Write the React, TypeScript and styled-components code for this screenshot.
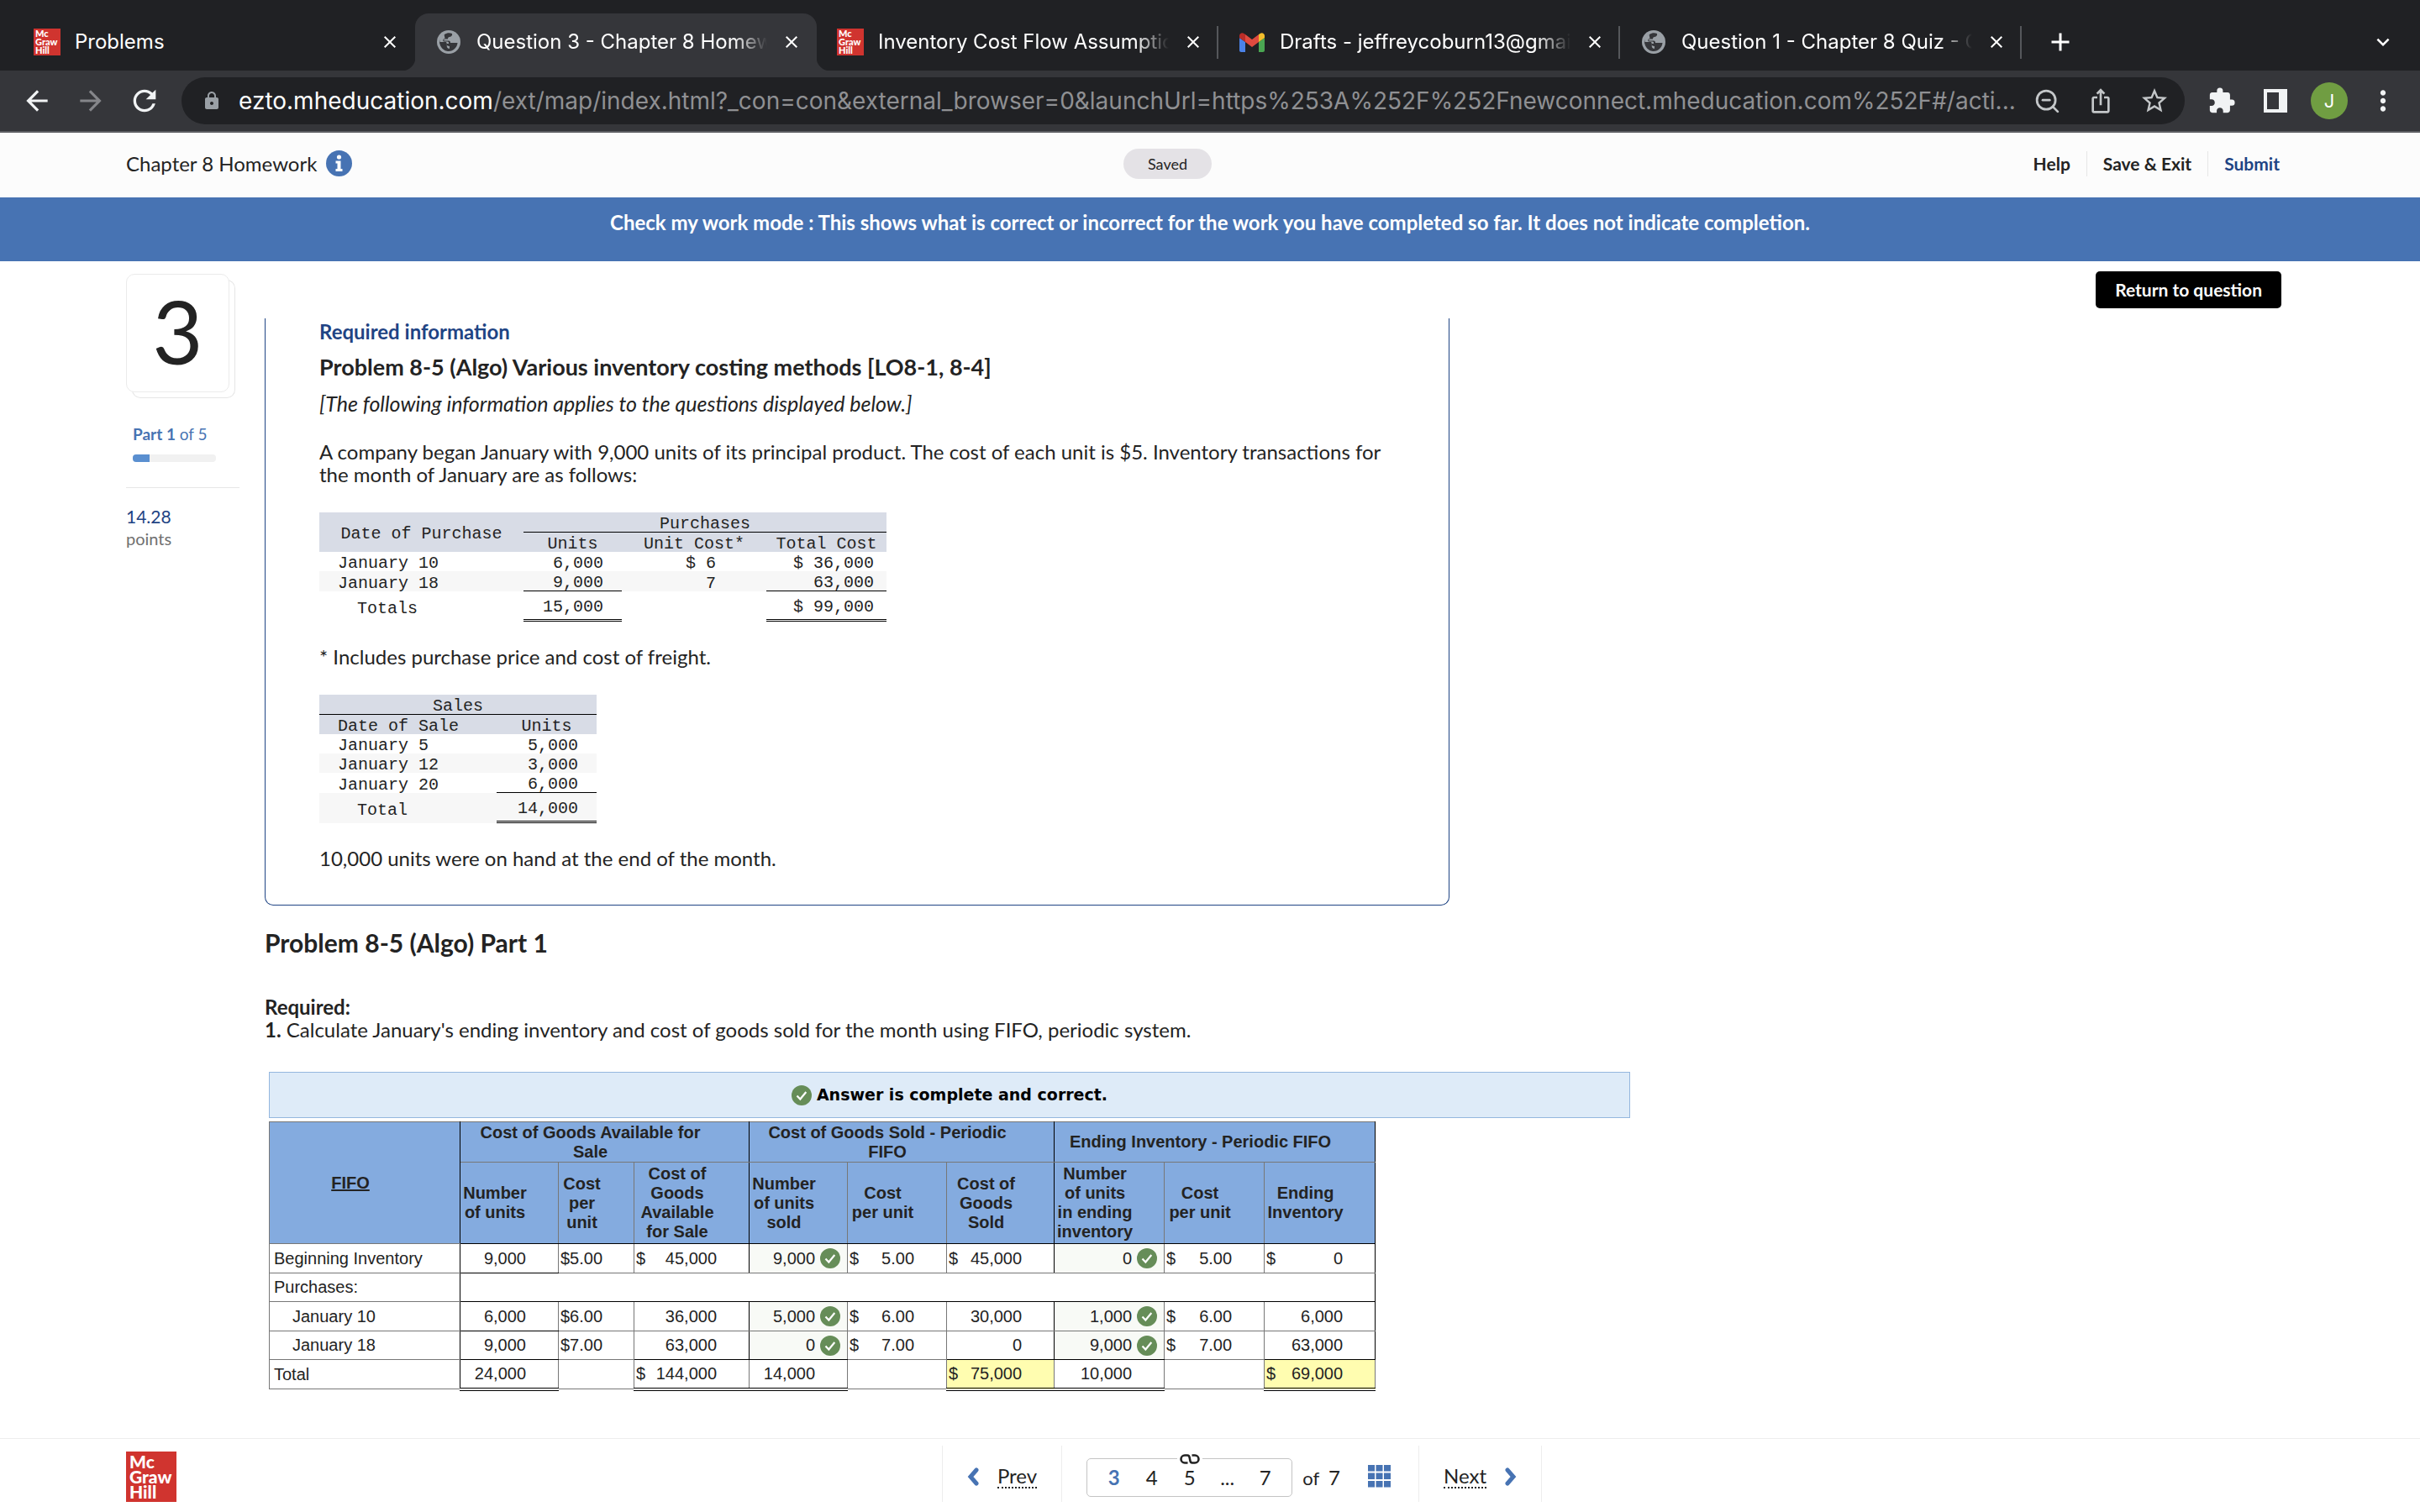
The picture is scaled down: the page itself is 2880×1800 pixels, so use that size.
import React from "react";
import styled, { createGlobalStyle, css } from "styled-components";
import { ZoomOut } from "lucide-react";
import {
  MdAdd,
  MdArrowBack,
  MdArrowForward,
  MdClose,
  MdExpandMore,
  MdExtension,
  MdIosShare,
  MdLock,
  MdMoreVert,
  MdRefresh,
  MdStarBorder,
} from "react-icons/md";

const ui = `Inter, Roboto, sans-serif`;
const body = `Lato, "Open Sans", sans-serif`;
const mono = `"Liberation Mono", "Courier New", monospace`;
const arial = `"Liberation Sans", Arial, sans-serif`;
const verdana = `"DejaVu Sans", Verdana, sans-serif`;

const ink = "#232323";
const navy = "#1f4484";
const blue = "#4773b3";
const red = "#d0342f";

const GlobalStyle = createGlobalStyle`
  *, *::before, *::after { box-sizing: border-box; }
  body { margin: 0; background: #fff; color: ${ink}; font-family: ${body}; }
  button { font: inherit; color: inherit; border: 0; padding: 0; background: none; cursor: pointer; }
  a { color: inherit; text-decoration: none; }
  h1, h2, h3, p { margin: 0; }
`;

const Page = styled.div`
  display: flex;
  flex-direction: column;
  min-height: 100vh;
`;

/* ---------- Browser chrome ---------- */

const TabStrip = styled.div`
  display: flex;
  align-items: stretch;
  height: 84px;
  padding: 16px 24px 0 16px;
  background: #202124;
  color: #fff;
  font-family: ${ui};
`;

const Tab = styled.div<{ $active?: boolean; $divider?: boolean }>`
  position: relative;
  display: flex;
  align-items: center;
  gap: 17px;
  flex: 0 1 478px;
  min-width: 0;
  padding: 0 18px 0 24px;
  border-radius: 16px 16px 0 0;
  ${(p) =>
    p.$active &&
    css`
      background: #35363a;
      &::before,
      &::after {
        content: "";
        position: absolute;
        bottom: 0;
        width: 16px;
        height: 16px;
      }
      &::before {
        right: 100%;
        background: radial-gradient(circle at 0 0, #202124 16px, #35363a 17px);
      }
      &::after {
        left: 100%;
        background: radial-gradient(circle at 100% 0, #202124 16px, #35363a 17px);
      }
    `}
  ${(p) =>
    p.$divider &&
    css`
      &::after {
        content: "";
        position: absolute;
        right: 0;
        top: 15px;
        width: 2px;
        height: 39px;
        background: #55575b;
      }
    `}
`;

const TabIcon = styled.span`
  display: flex;
  justify-content: center;
  flex: 0 0 32px;
`;

const TabTitle = styled.span<{ $fade?: boolean }>`
  flex: 1;
  min-width: 0;
  overflow: hidden;
  white-space: nowrap;
  font-size: 24px;
  line-height: 32px;
  ${(p) =>
    p.$fade &&
    css`
      mask-image: linear-gradient(90deg, #000 calc(100% - 40px), transparent);
    `}
`;

const IconButton = styled.button`
  display: flex;
  align-items: center;
  justify-content: center;
  flex: none;
`;

const NewTab = styled(IconButton)`
  width: 64px;
  margin-left: 14px;
`;

const TabSearch = styled(IconButton)`
  width: 40px;
  margin-left: auto;
`;

const Toolbar = styled.div`
  display: flex;
  align-items: center;
  height: 74px;
  padding: 0 12px;
  background: #35363a;
  border-bottom: 2px solid #5d5e62;
  color: #f1f3f4;
  font-family: ${ui};
`;

const NavButton = styled(IconButton)<{ $dim?: boolean }>`
  width: 64px;
  height: 56px;
  color: ${(p) => (p.$dim ? "#85868a" : "#f1f3f4")};
`;

const Omnibox = styled.div`
  display: flex;
  align-items: center;
  flex: 1;
  min-width: 0;
  height: 56px;
  margin: 0 12px;
  padding: 0 4px 0 24px;
  border-radius: 28px;
  background: #202124;
  color: #9aa0a6;
`;

const Address = styled.div`
  flex: 1;
  min-width: 0;
  margin-left: 20px;
  overflow: hidden;
  white-space: nowrap;
  text-overflow: ellipsis;
  font-size: 28px;
  line-height: 40px;
  color: #8f9093;
`;

const Host = styled.span`
  color: #fff;
`;

const OmniAction = styled(IconButton)`
  width: 64px;
  color: #c4c7c9;
`;

const SidePanelGlyph = styled.span`
  width: 28px;
  height: 28px;
  border: 4px solid #f1f3f4;
  border-right-width: 10px;
`;

const Avatar = styled.span`
  display: grid;
  place-items: center;
  width: 44px;
  height: 44px;
  border-radius: 50%;
  background: #709d42;
  color: #fff;
  font-size: 22px;
`;

/* ---------- Assignment header ---------- */

const Header = styled.header`
  display: grid;
  grid-template-columns: 1fr auto 1fr;
  align-items: center;
  height: 77px;
  padding: 0 165px 4px 150px;
  background: #fcfcfc;
`;

const Title = styled.h1`
  display: flex;
  align-items: center;
  gap: 11px;
  font-size: 24px;
  font-weight: 400;
`;

const InfoButton = styled.button`
  display: flex;
`;

const Saved = styled.span`
  margin-right: 86px;
  padding: 0 29px;
  border-radius: 18px;
  background: #e4e2e6;
  font-size: 18px;
  line-height: 36px;
`;

const Actions = styled.nav`
  display: flex;
  justify-content: flex-end;
`;

const Action = styled.button<{ $primary?: boolean }>`
  padding: 0 19px;
  border-left: 1px solid #e6e6e6;
  color: ${(p) => (p.$primary ? navy : ink)};
  font-size: 21px;
  font-weight: 700;
  line-height: 30px;
  &:first-child {
    border-left: 0;
  }
  &:last-child {
    padding-right: 2px;
  }
`;

const Banner = styled.div`
  height: 76px;
  padding: 14px 24px;
  background: ${blue};
  color: #fff;
  font-size: 24px;
  font-weight: 700;
  line-height: 32px;
  text-align: center;
`;

/* ---------- Question ---------- */

const Main = styled.main`
  display: flex;
  align-items: flex-start;
  flex: 1;
  padding: 0 165px 40px 150px;
`;

const Rail = styled.aside`
  flex: 0 0 135px;
  margin: 15px 30px 0 0;
`;

const NumberCard = styled.div`
  display: grid;
  place-items: center;
  width: 123px;
  height: 141px;
  padding-bottom: 6px;
  border: 1px solid #ebebeb;
  border-radius: 10px;
  background: #fff;
  box-shadow: 7px 7px 0 -1px #fff, 7px 7px 0 0 #e6e6e6;
  font-size: 104px;
  line-height: 104px;
`;

const PartLabel = styled.label`
  display: block;
  margin: 36px 8px 10px;
  color: ${blue};
  font-size: 19px;
  line-height: 28px;
`;

const Progress = styled.progress`
  display: block;
  width: 99px;
  height: 9px;
  margin-left: 8px;
  appearance: none;
  border: 0;
  border-radius: 4px;
  overflow: hidden;
  background: #f1f1f1;
  &::-webkit-progress-bar {
    background: #f1f1f1;
  }
  &::-webkit-progress-value {
    background: #5a8fd0;
  }
`;

const Points = styled.dl`
  display: flex;
  flex-direction: column-reverse;
  margin: 30px 0 0;
  padding-top: 21px;
  border-top: 1px solid #e6e6e6;
  line-height: 26px;
`;

const PointsValue = styled.dd`
  margin: 0;
  color: ${navy};
  font-size: 21px;
`;

const PointsLabel = styled.dt`
  color: #707070;
  font-size: 20px;
`;

const Article = styled.article`
  flex: 1;
  min-width: 0;
  max-width: 1625px;
  font-size: 24px;
  line-height: 27px;
`;

const Panel = styled.section`
  max-width: 1410px;
  margin-top: 68px;
  padding: 0 64px 42px;
  border: 1px solid ${navy};
  border-top: 0;
  border-radius: 0 0 10px 10px;
`;

const Kicker = styled.h3`
  color: ${navy};
  font-size: 24px;
  line-height: 32px;
`;

const Heading = styled.h2`
  margin-top: 10px;
  font-size: 27px;
  line-height: 32px;
`;

const Lead = styled.p`
  margin: 13px 0 30px;
  font-size: 25px;
  font-style: italic;
  line-height: 28px;
`;

const Para = styled.p`
  margin: 28px 0 32px;
`;

const LastPara = styled.p`
  margin-top: 28px;
`;

const MonoTable = styled.table<{ $width: number }>`
  width: ${(p) => p.$width}px;
  table-layout: fixed;
  border-collapse: separate;
  border-spacing: 0;
  font-family: ${mono};
  font-size: 20px;
  line-height: 19px;
  white-space: nowrap;
`;

const MonoHead = styled.thead`
  background: #d8dce6;
`;

const MonoRow = styled.tr<{ $shade?: boolean }>`
  background: ${(p) => (p.$shade ? "#f7f7f7" : "transparent")};
`;

const MonoTh = styled.th<{ $rule?: boolean; $left?: boolean }>`
  padding: 4px 0 0 ${(p) => (p.$left ? 22 : 0)}px;
  border-bottom: ${(p) => (p.$rule ? "1px solid #000" : "0")};
  font-weight: 400;
  text-align: ${(p) => (p.$left ? "left" : "center")};
`;

const MonoTd = styled.td<{ $rule?: boolean; $end?: number }>`
  padding: 4px ${(p) => p.$end ?? 0}px 0 ${(p) => (p.$end ? 0 : 22)}px;
  border-bottom: ${(p) => (p.$rule ? "1px solid #000" : "0")};
  text-align: ${(p) => (p.$end ? "right" : "left")};
`;

const MonoSum = styled.td<{ $double?: boolean; $end?: number }>`
  height: 36px;
  padding: 4px ${(p) => p.$end ?? 0}px 0 ${(p) => (p.$end ? 0 : 45)}px;
  border-bottom: ${(p) => (p.$double ? "3px double #000" : "0")};
  text-align: ${(p) => (p.$end ? "right" : "left")};
`;

const PartTitle = styled.h2`
  margin-top: 26px;
  font-size: 30px;
  line-height: 36px;
`;

const Required = styled.div`
  margin: 45px 0 37px;
`;

const AnswerBar = styled.div`
  display: flex;
  align-items: center;
  justify-content: center;
  gap: 6px;
  height: 55px;
  margin-left: 5px;
  border: 1px solid #94b7de;
  background: #deebf8;
  color: #000;
  font-family: ${verdana};
  font-size: 19px;
  font-weight: 700;
`;

const Ledger = styled.table`
  width: 1316px;
  margin: 4px 0 0 5px;
  table-layout: fixed;
  border-collapse: collapse;
  border: 1px solid #777;
  font-family: ${arial};
  font-size: 20px;
  line-height: 23px;
`;

const LedgerTh = styled.th<{ $black?: boolean; $blackBottom?: boolean }>`
  padding: 0 36px 0 2px;
  border-right: 1px solid ${(p) => (p.$black ? "#000" : "#777")};
  border-bottom: 1px solid ${(p) => (p.$blackBottom ? "#000" : "#777")};
  background: #84abdf;
`;

const LedgerRow = styled.tr<{ $height: number }>`
  height: ${(p) => p.$height}px;
`;

const RowLabel = styled.th<{ $indent?: boolean }>`
  padding: 0 0 0 ${(p) => (p.$indent ? 27 : 5)}px;
  border-right: 1px solid #000;
  border-bottom: 1px solid #777;
  font-weight: 400;
  text-align: left;
`;

const Cell = styled.td<{
  $black?: boolean;
  $blackBottom?: boolean;
  $double?: boolean;
  $tone?: "answer" | "total";
}>`
  padding: 0 2px;
  border-right: 1px solid ${(p) => (p.$black ? "#000" : "#777")};
  border-bottom: ${(p) =>
    p.$double ? "4px double #000" : p.$blackBottom ? "1px solid #000" : "1px solid #777"};
  background: ${(p) =>
    p.$tone === "answer" ? "#f8faf6" : p.$tone === "total" ? "#fffdb0" : "transparent"};
`;

const Amount = styled.div<{ $checked?: boolean }>`
  display: flex;
  align-items: center;
  gap: 6px;
  padding-right: ${(p) => (p.$checked ? 6 : 36)}px;
`;

const Figure = styled.span`
  margin-left: auto;
`;

const ReturnButton = styled.button`
  margin: 12px 0 0 auto;
  padding: 0 23px 1px;
  border-radius: 5px;
  background: #000;
  color: #fff;
  font-size: 21px;
  font-weight: 700;
  line-height: 43px;
  white-space: nowrap;
`;

/* ---------- Footer ---------- */

const Footer = styled.footer`
  display: grid;
  grid-template-columns: 1fr auto 1fr;
  align-items: flex-start;
  height: 88px;
  padding: 8px 150px 0;
  border-top: 1px solid #ededed;
`;

const Brand = styled.span<{ $large?: boolean }>`
  display: flex;
  flex-direction: column;
  justify-content: center;
  width: ${(p) => (p.$large ? 60 : 32)}px;
  height: ${(p) => (p.$large ? 60 : 32)}px;
  padding-left: ${(p) => (p.$large ? 4 : 2)}px;
  background: ${red};
  color: #fff;
  font-family: ${body};
  font-size: ${(p) => (p.$large ? 21 : 11)}px;
  font-weight: 900;
  line-height: ${(p) => (p.$large ? 18 : 10)}px;
`;

const FooterBrand = styled.a`
  width: 60px;
  margin-top: 7px;
`;

const Pager = styled.nav`
  display: flex;
  align-items: center;
  height: 67px;
  margin-left: 76px;
  font-size: 24px;
`;

const PagerEnd = styled.div`
  display: flex;
  align-items: center;
  align-self: stretch;
  padding: 6px 29px 0;
  border: solid #ededed;
  border-width: 0 1px;
`;

const StepButton = styled.button`
  display: flex;
  align-items: center;
  gap: 22px;
  color: ${blue};
`;

const StepText = styled.span`
  border-bottom: 2px dotted ${ink};
  color: ${ink};
  font-size: 24px;
  line-height: 26px;
`;

const PageBox = styled.div`
  position: relative;
  display: flex;
  align-items: center;
  height: 46px;
  margin: 8px 0 0 29px;
  padding: 0 9px;
  border: 1px solid #c4c4c4;
  border-radius: 5px;
`;

const PageLink = styled.a<{ $current?: boolean }>`
  width: 45px;
  color: ${(p) => (p.$current ? blue : ink)};
  font-weight: ${(p) => (p.$current ? 700 : 400)};
  text-align: center;
`;

const LinkBadge = styled.span`
  position: absolute;
  top: -6px;
  left: 50%;
  display: flex;
  padding: 0 3px;
  transform: translateX(-50%);
  background: #fff;
`;

const Of = styled.span`
  display: flex;
  align-items: baseline;
  gap: 11px;
  margin: 7px 33px 0 12px;
`;

const OfWord = styled.span`
  font-size: 22px;
`;

const GridButton = styled(IconButton)`
  margin: 5px 33px 0 0;
`;

/* ---------- Drawings ---------- */

const McGrawHill = ({ large }: { large?: boolean }) => (
  <Brand $large={large}>
    <span>Mc</span>
    <span>Graw</span>
    <span>Hill</span>
  </Brand>
);

const Globe = () => (
  <svg width="28" height="28" viewBox="0 0 28 28" aria-hidden="true">
    <circle cx="14" cy="14" r="14" fill="#9aa0a6" />
    <path
      fill="#35363a"
      d="M9 5C12 3 15 3 18 4c.5 2-.5 3.500-3 4-1.500.4-2 1-2 2.500H9.500c-1.500 0-2 1.500-.5 2h5c1.500 0 2 1 2 2.500h8.500C24 20.500 19.500 25 14 25h-1.500c-.3-2 .5-3 2.500-3.200V19c-2.500 0-3.500-1-3.500-3H3.500l-.3-2C3.500 9.500 5.500 6.500 9 5z"
    />
    <path
      fill="#9aa0a6"
      d="M3 8.500L8.500 4.500 9.500 10c-2 0-3 2-1.500 3.500h4.500c1.200 0 2 1 1.500 2.500H4z"
    />
    <path fill="#35363a" d="M3.200 14h7.800l.8 2v3c-.2 1.500 1 2.500 2.200 2.800v3.200C8 25 3.200 20 3.200 14z" />
  </svg>
);

const Gmail = () => (
  <svg width="30" height="23" viewBox="0 0 30 23" aria-hidden="true">
    <path fill="#4b82e8" d="M2 23h5V11L0 6v15c0 1.100.9 2 2 2z" />
    <path fill="#4aa652" d="M23 23h5c1.100 0 2-.9 2-2V6l-7 5z" />
    <path fill="#f2bd2c" d="M23 2v9l7-5V3.500C30 .4 26.500-.8 24.500 1z" />
    <path fill="#e04a3f" d="M7 11V2l8 6 8-6v9l-8 6z" />
    <path fill="#b92d28" d="M0 3.500V6l7 5V2L5.500 1C3.500-.8 0 .4 0 3.500z" />
  </svg>
);

const Info = () => (
  <svg width="31" height="31" viewBox="0 0 31 31" aria-hidden="true">
    <circle cx="15.500" cy="15.500" r="15.500" fill={blue} />
    <circle cx="15.500" cy="8" r="2.600" fill="#fff" />
    <path fill="#fff" d="M11.500 12.500h6v9.500h2v3h-8v-3h2v-6.500h-2z" />
  </svg>
);

const Check = () => (
  <svg width="24" height="24" viewBox="0 0 24 24" aria-label="correct" role="img">
    <circle cx="12" cy="12" r="12" fill="#668d58" />
    <path d="M6.500 12.500l3.800 4 7-8.500" fill="none" stroke="#fff" strokeWidth="2.200" />
  </svg>
);

const Chevron = ({ flip }: { flip?: boolean }) => (
  <svg width="14" height="22" viewBox="0 0 14 22" aria-hidden="true">
    <path
      d={flip ? "M3 3l7 8-7 8" : "M11 3l-7 8 7 8"}
      fill="none"
      stroke="currentColor"
      strokeWidth="5"
      strokeLinecap="round"
    />
  </svg>
);

const GridGlyph = () => (
  <svg width="27" height="27" viewBox="0 0 27 27" fill={blue} aria-hidden="true">
    {[0, 9.5, 19].map((y) =>
      [0, 9.5, 19].map((x) => <rect key={`${x}-${y}`} x={x} y={y} width="8" height="7.500" />)
    )}
  </svg>
);

const LinkGlyph = () => (
  <svg width="24" height="12" viewBox="0 0 24 12" fill="none" stroke={ink} strokeWidth="2.600" aria-hidden="true">
    <path d="M9.500 10.500H6a4.500 4.500 0 0 1 0-9h3c3 0 2.500 2.500 3 4.500s0 4.500 3 4.500h3a4.500 4.500 0 0 0 0-9h-3.500" />
  </svg>
);

/* ---------- Data ---------- */

type TabInfo = { icon: "mgh" | "globe" | "gmail"; title: string; active?: boolean; divider?: boolean; fade?: boolean };

const tabs: TabInfo[] = [
  { icon: "mgh", title: "Problems" },
  { icon: "globe", title: "Question 3 - Chapter 8 Homew", active: true, fade: true },
  { icon: "mgh", title: "Inventory Cost Flow Assumptio", divider: true, fade: true },
  { icon: "gmail", title: "Drafts - jeffreycoburn13@gmail", divider: true, fade: true },
  { icon: "globe", title: "Question 1 - Chapter 8 Quiz - C", divider: true, fade: true },
];

type Value = { sign?: string; text?: string; plain?: string };
const n = (text: string): Value => ({ text });
const d = (text: string): Value => ({ sign: "$", text });
const p = (plain: string): Value => ({ plain });
const none: Value = {};

const ledgerRows: { label: string; indent?: boolean; cells?: Value[]; height: number; total?: boolean }[] = [
  {
    label: "Beginning Inventory",
    height: 35,
    cells: [n("9,000"), p("$5.00"), d("45,000"), n("9,000"), d("5.00"), d("45,000"), n("0"), d("5.00"), d("0")],
  },
  { label: "Purchases:", height: 34 },
  {
    label: "January 10",
    indent: true,
    height: 35,
    cells: [n("6,000"), p("$6.00"), n("36,000"), n("5,000"), d("6.00"), n("30,000"), n("1,000"), d("6.00"), n("6,000")],
  },
  {
    label: "January 18",
    indent: true,
    height: 34,
    cells: [n("9,000"), p("$7.00"), n("63,000"), n("0"), d("7.00"), n("0"), n("9,000"), d("7.00"), n("63,000")],
  },
  {
    label: "Total",
    height: 35,
    total: true,
    cells: [n("24,000"), none, d("144,000"), n("14,000"), none, d("75,000"), n("10,000"), none, d("69,000")],
  },
];

const ledgerCols = [227, 117, 90, 137, 117, 118, 128, 131, 119, 132];

const Lines = ({ of }: { of: string[] }) => (
  <>
    {of.map((line, i) => (
      <React.Fragment key={line}>
        {i > 0 && <br />}
        {line}
      </React.Fragment>
    ))}
  </>
);

const columnHeads = [
  ["Number", "of units"],
  ["Cost", "per", "unit"],
  ["Cost of", "Goods", "Available", "for Sale"],
  ["Number", "of units", "sold"],
  ["Cost", "per unit"],
  ["Cost of", "Goods", "Sold"],
  ["Number", "of units", "in ending", "inventory"],
  ["Cost", "per unit"],
  ["Ending", "Inventory"],
];

const isAnswer = (i: number) => i === 3 || i === 6;
const isGroupEnd = (i: number) => i % 3 === 2;
const isCost = (i: number) => i % 3 === 1;

export default function App() {
  return (
    <>
      <GlobalStyle />
      <Page>
        <TabStrip>
          {tabs.map((t) => (
            <Tab key={t.title} $active={t.active} $divider={t.divider}>
              <TabIcon>
                {t.icon === "mgh" && <McGrawHill />}
                {t.icon === "globe" && <Globe />}
                {t.icon === "gmail" && <Gmail />}
              </TabIcon>
              <TabTitle $fade={t.fade}>{t.title}</TabTitle>
              <IconButton aria-label="Close tab">
                <MdClose size={24} />
              </IconButton>
            </Tab>
          ))}
          <NewTab aria-label="New tab">
            <MdAdd size={36} />
          </NewTab>
          <TabSearch aria-label="Search tabs">
            <MdExpandMore size={30} />
          </TabSearch>
        </TabStrip>

        <Toolbar>
          <NavButton aria-label="Back">
            <MdArrowBack size={38} />
          </NavButton>
          <NavButton aria-label="Forward" $dim>
            <MdArrowForward size={38} />
          </NavButton>
          <NavButton aria-label="Reload">
            <MdRefresh size={40} />
          </NavButton>
          <Omnibox>
            <MdLock size={24} />
            <Address>
              <Host>ezto.mheducation.com</Host>
              /ext/map/index.html?_con=con&amp;external_browser=0&amp;launchUrl=https%253A%252F%252Fnewconnect.mheducation.com%252F#/acti...
            </Address>
            <OmniAction aria-label="Zoom">
              <ZoomOut size={33} strokeWidth={2} />
            </OmniAction>
            <OmniAction aria-label="Share">
              <MdIosShare size={32} />
            </OmniAction>
            <OmniAction aria-label="Bookmark">
              <MdStarBorder size={36} />
            </OmniAction>
          </Omnibox>
          <NavButton aria-label="Extensions">
            <MdExtension size={34} />
          </NavButton>
          <NavButton aria-label="Side panel">
            <SidePanelGlyph />
          </NavButton>
          <NavButton aria-label="Profile">
            <Avatar>J</Avatar>
          </NavButton>
          <NavButton aria-label="Menu">
            <MdMoreVert size={38} />
          </NavButton>
        </Toolbar>

        <Header>
          <Title>
            Chapter 8 Homework
            <InfoButton aria-label="Assignment information">
              <Info />
            </InfoButton>
          </Title>
          <Saved>Saved</Saved>
          <Actions>
            <Action>Help</Action>
            <Action>Save &amp; Exit</Action>
            <Action $primary>Submit</Action>
          </Actions>
        </Header>
        <Banner>
          Check my work mode : This shows what is correct or incorrect for the work you have completed so far. It does
          not indicate completion.
        </Banner>

        <Main>
          <Rail>
            <NumberCard>3</NumberCard>
            <PartLabel htmlFor="part-progress">
              <b>Part 1</b> of 5
            </PartLabel>
            <Progress id="part-progress" value={1} max={5} />
            <Points>
              <PointsLabel>points</PointsLabel>
              <PointsValue>14.28</PointsValue>
            </Points>
          </Rail>

          <Article>
            <Panel>
              <Kicker>Required information</Kicker>
              <Heading>Problem 8-5 (Algo) Various inventory costing methods [LO8-1, 8-4]</Heading>
              <Lead>[The following information applies to the questions displayed below.]</Lead>
              <Para>
                A company began January with 9,000 units of its principal product. The cost of each unit is $5.
                Inventory transactions for
                <br />
                the month of January are as follows:
              </Para>

              <MonoTable $width={675}>
                <colgroup>
                  <col width="243" />
                  <col width="117" />
                  <col width="172" />
                  <col width="143" />
                </colgroup>
                <MonoHead>
                  <tr>
                    <MonoTh rowSpan={2}>Date of Purchase</MonoTh>
                    <MonoTh colSpan={3} $rule>
                      Purchases
                    </MonoTh>
                  </tr>
                  <tr>
                    <MonoTh>Units</MonoTh>
                    <MonoTh>Unit Cost*</MonoTh>
                    <MonoTh>Total Cost</MonoTh>
                  </tr>
                </MonoHead>
                <tbody>
                  <MonoRow>
                    <MonoTd>January 10</MonoTd>
                    <MonoTd $end={22}>6,000</MonoTd>
                    <MonoTd $end={60}>$ 6</MonoTd>
                    <MonoTd $end={15}>$ 36,000</MonoTd>
                  </MonoRow>
                  <MonoRow $shade>
                    <MonoTd>January 18</MonoTd>
                    <MonoTd $end={22} $rule>
                      9,000
                    </MonoTd>
                    <MonoTd $end={60}>7</MonoTd>
                    <MonoTd $end={15} $rule>
                      63,000
                    </MonoTd>
                  </MonoRow>
                  <MonoRow>
                    <MonoSum>Totals</MonoSum>
                    <MonoSum $end={22} $double>
                      15,000
                    </MonoSum>
                    <MonoSum />
                    <MonoSum $end={15} $double>
                      $ 99,000
                    </MonoSum>
                  </MonoRow>
                </tbody>
              </MonoTable>

              <Para>* Includes purchase price and cost of freight.</Para>

              <MonoTable $width={330}>
                <colgroup>
                  <col width="211" />
                  <col width="119" />
                </colgroup>
                <MonoHead>
                  <tr>
                    <MonoTh colSpan={2} $rule>
                      Sales
                    </MonoTh>
                  </tr>
                  <tr>
                    <MonoTh $left>Date of Sale</MonoTh>
                    <MonoTh>Units</MonoTh>
                  </tr>
                </MonoHead>
                <tbody>
                  <MonoRow>
                    <MonoTd>January 5</MonoTd>
                    <MonoTd $end={22}>5,000</MonoTd>
                  </MonoRow>
                  <MonoRow $shade>
                    <MonoTd>January 12</MonoTd>
                    <MonoTd $end={22}>3,000</MonoTd>
                  </MonoRow>
                  <MonoRow>
                    <MonoTd>January 20</MonoTd>
                    <MonoTd $end={22} $rule>
                      6,000
                    </MonoTd>
                  </MonoRow>
                  <MonoRow $shade>
                    <MonoSum>Total</MonoSum>
                    <MonoSum $end={22} $double>
                      14,000
                    </MonoSum>
                  </MonoRow>
                </tbody>
              </MonoTable>

              <LastPara>10,000 units were on hand at the end of the month.</LastPara>
            </Panel>

            <PartTitle>Problem 8-5 (Algo) Part 1</PartTitle>
            <Required>
              <p>
                <b>Required:</b>
              </p>
              <p>
                <b>1.</b> Calculate January's ending inventory and cost of goods sold for the month using FIFO, periodic
                system.
              </p>
            </Required>

            <AnswerBar>
              <Check />
              Answer is complete and correct.
            </AnswerBar>

            <Ledger>
              <colgroup>
                {ledgerCols.map((w, i) => (
                  <col key={i} width={w} />
                ))}
              </colgroup>
              <thead>
                <LedgerRow $height={48}>
                  <LedgerTh rowSpan={2} $black>
                    <u>FIFO</u>
                  </LedgerTh>
                  <LedgerTh colSpan={3} $black>
                    <Lines of={["Cost of Goods Available for", "Sale"]} />
                  </LedgerTh>
                  <LedgerTh colSpan={3} $black>
                    <Lines of={["Cost of Goods Sold - Periodic", "FIFO"]} />
                  </LedgerTh>
                  <LedgerTh colSpan={3} $black>
                    Ending Inventory - Periodic FIFO
                  </LedgerTh>
                </LedgerRow>
                <LedgerRow $height={97}>
                  {columnHeads.map((lines, i) => (
                    <LedgerTh key={i} $black={isGroupEnd(i)} $blackBottom>
                      <Lines of={lines} />
                    </LedgerTh>
                  ))}
                </LedgerRow>
              </thead>
              <tbody>
                {ledgerRows.map((row, r) => (
                  <LedgerRow key={row.label} $height={row.height}>
                    <RowLabel scope="row" $indent={row.indent}>
                      {row.label}
                    </RowLabel>
                    {row.cells ? (
                      row.cells.map((v, i) => (
                        <Cell
                          key={i}
                          $black={isGroupEnd(i) && !row.total}
                          $blackBottom={i === 0 || (r === 3 && !isCost(i))}
                          $double={row.total && !isCost(i)}
                          $tone={
                            isAnswer(i) && !row.total
                              ? "answer"
                              : row.total && (i === 5 || i === 8)
                              ? "total"
                              : undefined
                          }
                        >
                          <Amount $checked={isAnswer(i) && !row.total}>
                            {v.plain}
                            {v.sign && <span>{v.sign}</span>}
                            <Figure>{v.text}</Figure>
                            {isAnswer(i) && !row.total && <Check />}
                          </Amount>
                        </Cell>
                      ))
                    ) : (
                      <Cell colSpan={9} $black $blackBottom />
                    )}
                  </LedgerRow>
                ))}
              </tbody>
            </Ledger>
          </Article>

          <ReturnButton>Return to question</ReturnButton>
        </Main>

        <Footer>
          <FooterBrand href="#" aria-label="McGraw Hill">
            <McGrawHill large />
          </FooterBrand>
          <Pager>
            <PagerEnd>
              <StepButton>
                <Chevron />
                <StepText>Prev</StepText>
              </StepButton>
            </PagerEnd>
            <PageBox>
              <LinkBadge>
                <LinkGlyph />
              </LinkBadge>
              <PageLink href="#3" $current>
                3
              </PageLink>
              <PageLink href="#4">4</PageLink>
              <PageLink href="#5">5</PageLink>
              <PageLink as="span">...</PageLink>
              <PageLink href="#7">7</PageLink>
            </PageBox>
            <Of>
              <OfWord>of</OfWord>
              <span>7</span>
            </Of>
            <GridButton aria-label="All questions">
              <GridGlyph />
            </GridButton>
            <PagerEnd>
              <StepButton>
                <StepText>Next</StepText>
                <Chevron flip />
              </StepButton>
            </PagerEnd>
          </Pager>
        </Footer>
      </Page>
    </>
  );
}
